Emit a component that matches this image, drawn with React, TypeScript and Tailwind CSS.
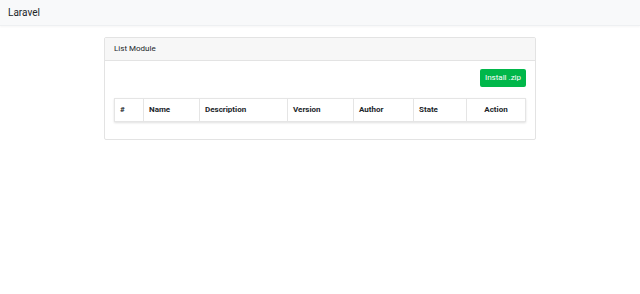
const columns = [
  { label: '#', width: 'w-[28px]', center: false },
  { label: 'Name', width: 'w-[56px]', center: false },
  { label: 'Description', width: 'w-[88px]', center: false },
  { label: 'Version', width: 'w-[66px]', center: false },
  { label: 'Author', width: 'w-[60px]', center: false },
  { label: 'State', width: 'w-[53px]', center: false },
  { label: 'Action', width: 'flex-1', center: true },
]

export default function App() {
  return (
    <div className="min-h-[294px] w-[640px] bg-white font-['Roboto','Liberation_Sans',sans-serif] text-[#212529]">
      <nav className="flex h-[26px] items-center border-b border-[#eef0f2] bg-[#f8f9fa] px-[8px] shadow-[0_1px_2px_rgba(0,0,0,0.04)]">
        <span className="text-[10px] leading-none">Laravel</span>
      </nav>

      <main className="flex justify-center pt-[11px]">
        <section className="w-[432px] rounded-[2px] border border-[#e3e3e3] bg-white">
          <header className="flex h-[23px] items-center border-b border-[#e3e3e3] bg-[#f7f7f7] px-[9px]">
            <h1 className="text-[8px] leading-none">List Module</h1>
          </header>

          <div className="px-[9px] pb-[10px] pt-[8px]">
            <div className="flex justify-end">
              <button
                type="button"
                className="h-[18px] w-[46px] rounded-[2px] bg-[#00b74a] text-[8px] leading-none text-white"
              >
                Install .zip
              </button>
            </div>

            <div className="mb-[7px] mt-[11px] flex h-[24px] border border-[#e5e5e5] shadow-[0_1px_2px_rgba(0,0,0,0.12)]">
              {columns.map((col, i) => (
                <div
                  key={col.label}
                  className={`flex items-center px-[5px] text-[8px] font-bold leading-none ${col.width} ${col.center ? 'justify-center' : ''} ${i > 0 ? 'border-l border-[#e5e5e5]' : ''}`}
                >
                  {col.label}
                </div>
              ))}
            </div>
          </div>
        </section>
      </main>
    </div>
  )
}
